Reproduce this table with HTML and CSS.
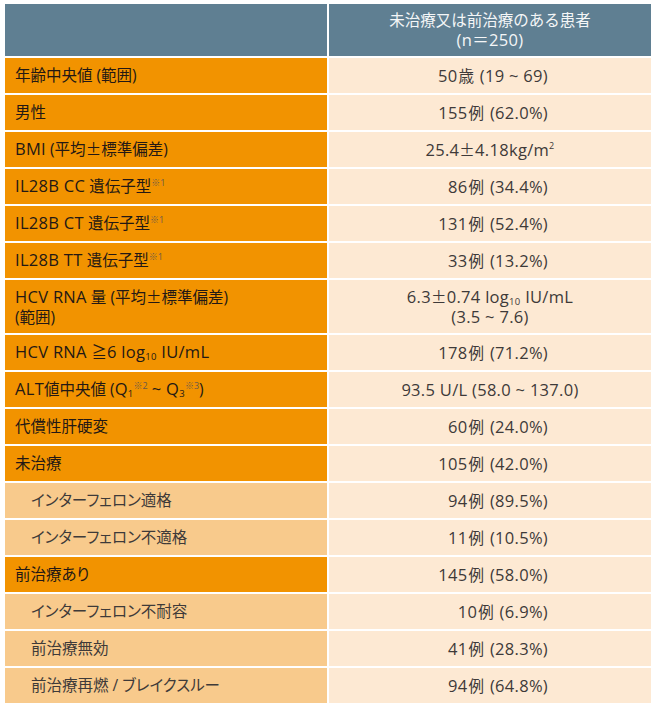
FILE: index.html
```html
<!DOCTYPE html>
<html lang="ja">
<head>
<meta charset="utf-8">
<link rel="stylesheet" href="styles.css">
</head>
<body>
<div class="tbl">
  <div class="cell head"><span></span></div>
  <div class="cell head hv"><span>未治療又は前治療のある患者<br><span class="en">(n＝250)</span></span></div>

  <div class="cell lbl"><span>年齢中央値 (範囲)</span></div>
  <div class="cell val cnt"><span>50<span class="j">歳</span> (19 ~ 69)</span></div>

  <div class="cell lbl"><span>男性</span></div>
  <div class="cell val cnt"><span>155<span class="j">例</span> (62.0%)</span></div>

  <div class="cell lbl"><span><span class="en">BMI</span> (平均<span class="jx">±</span>標準偏差)</span></div>
  <div class="cell val"><span>25.4<span class="jx">±</span>4.18kg/m<sup class="sp">2</sup></span></div>

  <div class="cell lbl"><span><span class="en">IL28B CC</span> 遺伝子型<sup class="note">※1</sup></span></div>
  <div class="cell val cnt"><span>86<span class="j">例</span> (34.4%)</span></div>

  <div class="cell lbl"><span><span class="en">IL28B CT</span> 遺伝子型<sup class="note">※1</sup></span></div>
  <div class="cell val cnt"><span>131<span class="j">例</span> (52.4%)</span></div>

  <div class="cell lbl"><span><span class="en">IL28B TT</span> 遺伝子型<sup class="note">※1</sup></span></div>
  <div class="cell val cnt"><span>33<span class="j">例</span> (13.2%)</span></div>

  <div class="cell lbl tall"><span><span class="en">HCV RNA</span> 量 (平均<span class="jx">±</span>標準偏差)<br>(範囲)</span></div>
  <div class="cell val tall"><span>6.3<span class="jx">±</span>0.74 log<sub class="sb">10</sub> IU/mL<br>(3.5 ~ 7.6)</span></div>

  <div class="cell lbl"><span><span class="en">HCV RNA </span><span class="jx">≧</span><span class="en">6 log<sub class="sb">10</sub> IU/mL</span></span></div>
  <div class="cell val cnt"><span>178<span class="j">例</span> (71.2%)</span></div>

  <div class="cell lbl"><span><span class="en">ALT</span>値中央値 (<span class="en">Q<sub class="sb">1</sub></span><sup class="note">※2</sup> <span class="en">~ Q<sub class="sb">3</sub></span><sup class="note">※3</sup>)</span></div>
  <div class="cell val"><span>93.5 U/L (58.0 ~ 137.0)</span></div>

  <div class="cell lbl"><span>代償性肝硬変</span></div>
  <div class="cell val cnt"><span>60<span class="j">例</span> (24.0%)</span></div>

  <div class="cell lbl"><span>未治療</span></div>
  <div class="cell val cnt"><span>105<span class="j">例</span> (42.0%)</span></div>

  <div class="cell sub"><span>インターフェロン適格</span></div>
  <div class="cell val cnt"><span>94<span class="j">例</span> (89.5%)</span></div>

  <div class="cell sub"><span>インターフェロン不適格</span></div>
  <div class="cell val cnt"><span>11<span class="j">例</span> (10.5%)</span></div>

  <div class="cell lbl"><span>前治療あり</span></div>
  <div class="cell val cnt"><span>145<span class="j">例</span> (58.0%)</span></div>

  <div class="cell sub"><span>インターフェロン不耐容</span></div>
  <div class="cell val cnt"><span>10<span class="j">例</span> (6.9%)</span></div>

  <div class="cell sub"><span>前治療無効</span></div>
  <div class="cell val cnt"><span>41<span class="j">例</span> (28.3%)</span></div>

  <div class="cell sub"><span>前治療再燃 / ブレイクスルー</span></div>
  <div class="cell val cnt"><span>94<span class="j">例</span> (64.8%)</span></div>
</div>
</body>
</html>
```

FILE: styles.css
```css
html, body {
  margin: 0;
  padding: 0;
  background: #ffffff;
}

body {
  font-family: "Open Sans", "Noto Sans CJK JP", sans-serif;
  font-size: 15.5px;
}

.tbl {
  display: grid;
  grid-template-columns: 322px 322px;
  gap: 2px;
  padding: 4px 4px 0 5px;
}

.cell {
  display: flex;
  align-items: center;
  box-sizing: border-box;
  height: 35px;
  padding: 0 10px;
  line-height: 19px;
  overflow: hidden;
}

.cell.tall {
  height: 53px;
  line-height: 20px;
}

.head {
  background: #5f7f92;
  color: #f4f6f7;
  height: 52px;
  line-height: 20px;
}

.hv {
  justify-content: center;
  text-align: center;
}

.lbl {
  background: #f29300;
  color: #231815;
  font-feature-settings: "palt";
}

.sub {
  background: #f8ca8c;
  color: #3e3a39;
  padding-left: 26px;
  font-feature-settings: "palt";
}

.val {
  background: #fde9d3;
  color: #3e3a39;
  justify-content: center;
  text-align: center;
  font-size: 16.5px;
  letter-spacing: 0.3px;
}

.val.cnt {
  justify-content: flex-end;
  padding-right: 103px;
}

.en {
  font-size: 16.5px;
  letter-spacing: 0.3px;
  line-height: 1;
}

.j {
  font-size: 15.5px;
  margin: 0 1px;
  line-height: 1;
}

.jx {
  font-family: "Noto Sans CJK JP", sans-serif;
  font-size: 15.5px;
  line-height: 1;
}

.note {
  font-size: 9px;
  line-height: 0;
  vertical-align: 6px;
  color: #6a5a4a;
  letter-spacing: 0;
}

.sp {
  font-size: 9px;
  line-height: 0;
  vertical-align: 7px;
}

.sb {
  font-size: 9.5px;
  line-height: 0;
  vertical-align: -2px;
}
```
